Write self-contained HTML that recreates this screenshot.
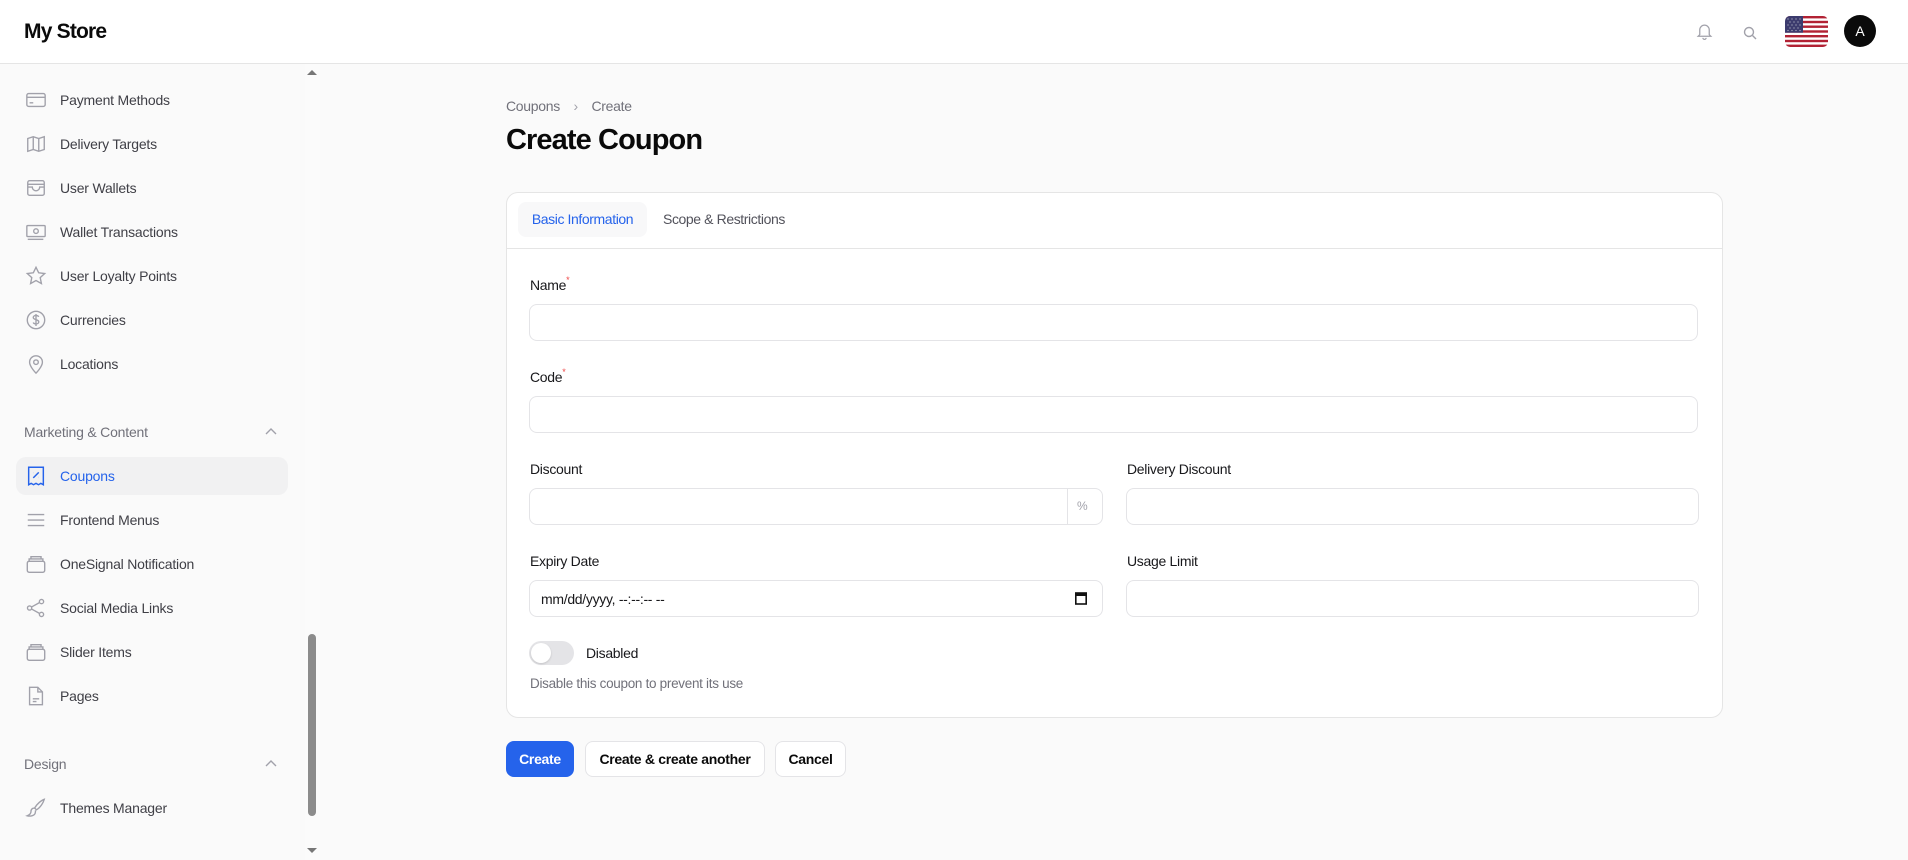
<!DOCTYPE html>
<html><head><meta charset="utf-8"><style>
*{box-sizing:border-box;margin:0;padding:0}
body{width:1908px;height:860px;overflow:hidden;background:#fafafa;font-family:"Liberation Sans",sans-serif;color:#0a0a0a;position:relative}
.abs{position:absolute}
#hdr{left:0;top:0;width:1908px;height:64px;background:#fff;border-bottom:1px solid #e5e5e5}
.logo{left:24px;top:20px;font-size:21px;font-weight:700;letter-spacing:-0.8px}
#side{left:0;top:64px;width:305px;height:796px;background:#fafafa}
#track{left:305px;top:64px;width:15px;height:796px;background:#fbfbfb}
.thumb{left:308px;top:634px;width:8px;height:182px;background:#8c8c8c;border-radius:4px}
.item{left:0;width:300px;height:38px;display:flex;align-items:center;font-size:14px;color:#3f3f46;letter-spacing:-0.2px}
.item svg{position:absolute;left:25px;width:22px;height:22px}
.item span{position:absolute;left:60px}
.sec{left:24px;font-size:14px;color:#71717a;letter-spacing:-0.2px}
.chev{left:265px;width:12px;height:8px}
.active{left:16px;top:457px;width:272px;height:38px;background:#f1f1f2;border-radius:10px}
.bc{left:506px;top:98px;font-size:14px;color:#71717a;letter-spacing:-0.3px}
.title{left:506px;top:124px;font-size:29px;font-weight:700;letter-spacing:-0.9px}
.card{left:506px;top:192px;width:1217px;height:526px;background:#fff;border:1px solid #e5e5e5;border-radius:12px}
.tabline{left:507px;top:248px;width:1215px;height:1px;background:#e5e5e5}
.tab1{left:518px;top:202px;width:129px;height:35px;background:#f8f8f9;border-radius:8px;font-size:14px;color:#2563eb;text-align:center;line-height:35px;letter-spacing:-0.4px}
.tab2{left:663px;top:202px;font-size:14px;color:#52525b;line-height:35px;letter-spacing:-0.4px}
.lbl{font-size:14px;color:#18181b;letter-spacing:-0.3px}
.lbl i{color:#ef4444;font-style:normal;font-size:9px;vertical-align:top;position:relative;top:-2px}
.inp{background:#fff;border:1px solid #e4e4e7;border-radius:8px;height:37px}
.btn{top:741px;height:36px;border-radius:8px;font-size:14px;font-weight:700;line-height:34px;text-align:center;letter-spacing:-0.3px;border:1px solid #e4e4e7;background:#fff}
</style></head><body>
<div id="hdr" class="abs"></div>
<div class="abs logo">My Store</div>
<svg class="abs" style="left:1695px;top:21px" width="19" height="21" viewBox="0 0 24 24" fill="none" stroke="#a1a1aa" stroke-width="1.6"><path d="M6 16V10a6 6 0 0 1 12 0v6l2 2H4l2-2z"/><path d="M10 20a2 2 0 0 0 4 0"/></svg>
<svg class="abs" style="left:1743px;top:26px" width="14" height="14" viewBox="0 0 14 14" fill="none" stroke="#a1a1aa" stroke-width="1.4"><circle cx="6" cy="6" r="4.5"/><path d="M9.5 9.5L13 13"/></svg>
<div class="abs" style="left:1785px;top:16px;width:43px;height:31px;border-radius:5px;overflow:hidden">
<svg width="43" height="31" viewBox="0 0 43 31" style="display:block">
<rect width="43" height="31" fill="#fff"/>
<g fill="#b22234"><rect y="0" width="43" height="2.4"/><rect y="4.8" width="43" height="2.4"/><rect y="9.5" width="43" height="2.4"/><rect y="14.3" width="43" height="2.4"/><rect y="19" width="43" height="2.4"/><rect y="23.8" width="43" height="2.4"/><rect y="28.6" width="43" height="2.4"/></g>
<rect width="18" height="16.7" fill="#3c3b6e"/>
<g fill="#fff" opacity=".7"><circle cx="3" cy="3" r=".6"/><circle cx="7" cy="3" r=".6"/><circle cx="11" cy="3" r=".6"/><circle cx="15" cy="3" r=".6"/><circle cx="5" cy="6" r=".6"/><circle cx="9" cy="6" r=".6"/><circle cx="13" cy="6" r=".6"/><circle cx="3" cy="9" r=".6"/><circle cx="7" cy="9" r=".6"/><circle cx="11" cy="9" r=".6"/><circle cx="15" cy="9" r=".6"/><circle cx="5" cy="12" r=".6"/><circle cx="9" cy="12" r=".6"/><circle cx="13" cy="12" r=".6"/><circle cx="3" cy="14.5" r=".6"/><circle cx="7" cy="14.5" r=".6"/><circle cx="11" cy="14.5" r=".6"/><circle cx="15" cy="14.5" r=".6"/></g>
</svg></div>
<div class="abs" style="left:1844px;top:15px;width:32px;height:32px;border-radius:50%;background:#0a0a0a;color:#fff;font-size:14px;text-align:center;line-height:32px">A</div>

<div id="side" class="abs"></div>
<div id="track" class="abs"></div>
<div class="abs" style="left:307px;top:70px;width:0;height:0;border-left:5px solid transparent;border-right:5px solid transparent;border-bottom:5px solid #777"></div>
<div class="abs" style="left:307px;top:848px;width:0;height:0;border-left:5px solid transparent;border-right:5px solid transparent;border-top:5px solid #777"></div>
<div class="abs thumb"></div>
<div class="abs active"></div>

<div class="abs item" style="top:81px"><svg viewBox="0 0 24 24" fill="none" stroke="#a1a1aa" stroke-width="1.5"><rect x="2" y="5" width="20" height="14" rx="2"/><path d="M2 9h20M5 15h4"/></svg><span>Payment Methods</span></div>
<div class="abs item" style="top:125px"><svg viewBox="0 0 24 24" fill="none" stroke="#a1a1aa" stroke-width="1.5"><path d="M3 6l6-2 6 2 6-2v14l-6 2-6-2-6 2z"/><path d="M9 4v14M15 6v14"/></svg><span>Delivery Targets</span></div>
<div class="abs item" style="top:169px"><svg viewBox="0 0 24 24" fill="none" stroke="#a1a1aa" stroke-width="1.5"><rect x="3" y="4" width="18" height="16" rx="2"/><path d="M3 8h18M3 11h5a4 4 0 0 0 8 0h5"/></svg><span>User Wallets</span></div>
<div class="abs item" style="top:213px"><svg viewBox="0 0 24 24" fill="none" stroke="#a1a1aa" stroke-width="1.5"><rect x="2" y="5" width="20" height="12" rx="1"/><circle cx="12" cy="11" r="2.5"/><path d="M3 20h17"/></svg><span>Wallet Transactions</span></div>
<div class="abs item" style="top:257px"><svg viewBox="0 0 24 24" fill="none" stroke="#a1a1aa" stroke-width="1.5"><path d="M12 2.5l2.9 6 6.6.8-4.9 4.5 1.3 6.5L12 17l-5.9 3.3 1.3-6.5-4.9-4.5 6.6-.8z"/></svg><span>User Loyalty Points</span></div>
<div class="abs item" style="top:301px"><svg viewBox="0 0 24 24" fill="none" stroke="#a1a1aa" stroke-width="1.5"><circle cx="12" cy="12" r="9.5"/><path d="M15 8.5c-.5-1-1.7-1.5-3-1.5-1.7 0-3 .9-3 2.3 0 3 6 1.7 6 4.7 0 1.4-1.3 2.3-3 2.3-1.4 0-2.6-.6-3-1.6M12 5.5v13"/></svg><span>Currencies</span></div>
<div class="abs item" style="top:345px"><svg viewBox="0 0 24 24" fill="none" stroke="#a1a1aa" stroke-width="1.5"><path d="M12 22s-7-7-7-12a7 7 0 0 1 14 0c0 5-7 12-7 12z"/><circle cx="12" cy="10" r="2.5"/></svg><span>Locations</span></div>

<div class="abs sec" style="top:424px">Marketing &amp; Content</div>
<svg class="abs chev" style="top:427px" viewBox="0 0 12 8" fill="none" stroke="#a1a1aa" stroke-width="1.4"><path d="M1 7l5-5 5 5"/></svg>

<div class="abs item" style="top:457px;color:#2563eb"><svg viewBox="0 0 24 24" fill="none" stroke="#2563eb" stroke-width="1.6"><path d="M4 2.5h16v19l-2.7-1.5-2.6 1.5-2.7-1.5-2.7 1.5-2.6-1.5L4 21.5z"/><path d="M9 14l6-6M9.5 8.5h.1M14.5 13.5h.1"/></svg><span>Coupons</span></div>
<div class="abs item" style="top:501px"><svg viewBox="0 0 24 24" fill="none" stroke="#a1a1aa" stroke-width="1.5"><path d="M3 6h18M3 12h18M3 18h18"/></svg><span>Frontend Menus</span></div>
<div class="abs item" style="top:545px"><svg viewBox="0 0 24 24" fill="none" stroke="#a1a1aa" stroke-width="1.5"><rect x="2.5" y="9" width="19" height="12" rx="2"/><path d="M4.5 9V6.5h15V9M6.5 6.5V4h11v2.5"/></svg><span>OneSignal Notification</span></div>
<div class="abs item" style="top:589px"><svg viewBox="0 0 24 24" fill="none" stroke="#a1a1aa" stroke-width="1.5"><circle cx="18" cy="5" r="2.3"/><circle cx="5" cy="12" r="2.3"/><circle cx="18" cy="19" r="2.3"/><path d="M7 11l9-5M7 13l9 5"/></svg><span>Social Media Links</span></div>
<div class="abs item" style="top:633px"><svg viewBox="0 0 24 24" fill="none" stroke="#a1a1aa" stroke-width="1.5"><rect x="2.5" y="9" width="19" height="12" rx="2"/><path d="M4.5 9V6.5h15V9M6.5 6.5V4h11v2.5"/></svg><span>Slider Items</span></div>
<div class="abs item" style="top:677px"><svg viewBox="0 0 24 24" fill="none" stroke="#a1a1aa" stroke-width="1.5"><path d="M5 2.5h9l5 5v14H5z"/><path d="M14 2.5v5h5M8.5 15h7M8.5 18h4"/></svg><span>Pages</span></div>

<div class="abs sec" style="top:756px">Design</div>
<svg class="abs chev" style="top:759px" viewBox="0 0 12 8" fill="none" stroke="#a1a1aa" stroke-width="1.4"><path d="M1 7l5-5 5 5"/></svg>
<div class="abs item" style="top:789px"><svg viewBox="0 0 24 24" fill="none" stroke="#a1a1aa" stroke-width="1.5"><path d="M21 2.5c-3 1-8 5-10.5 9.5l2 2C17 11.5 20 6 21 2.5z"/><path d="M10.5 12c-3 0-4 2-4 4s-1.5 3.5-4 4.5c3 .8 7.5 0 8.5-2.5.5-1.3.5-2.5.5-3.5"/></svg><span>Themes Manager</span></div>

<div class="abs bc">Coupons <span style="display:inline-block;margin:0 10px;color:#a1a1aa">&#x203A;</span> Create</div>
<div class="abs title">Create Coupon</div>

<div class="abs card"></div>
<div class="abs tabline"></div>
<div class="abs tab1">Basic Information</div>
<div class="abs tab2">Scope &amp; Restrictions</div>

<div class="abs lbl" style="left:530px;top:277px">Name<i>*</i></div>
<div class="abs inp" style="left:529px;top:304px;width:1169px"></div>
<div class="abs lbl" style="left:530px;top:369px">Code<i>*</i></div>
<div class="abs inp" style="left:529px;top:396px;width:1169px"></div>

<div class="abs lbl" style="left:530px;top:461px">Discount</div>
<div class="abs inp" style="left:529px;top:488px;width:574px"></div>
<div class="abs" style="left:1067px;top:489px;width:1px;height:35px;background:#e4e4e7"></div>
<div class="abs" style="left:1077px;top:499px;font-size:12px;color:#a1a1aa">%</div>
<div class="abs lbl" style="left:1127px;top:461px">Delivery Discount</div>
<div class="abs inp" style="left:1126px;top:488px;width:573px"></div>

<div class="abs lbl" style="left:530px;top:553px">Expiry Date</div>
<div class="abs inp" style="left:529px;top:580px;width:574px"></div>
<div class="abs" style="left:541px;top:591px;font-size:14px;color:#18181b;letter-spacing:-0.3px">mm/dd/yyyy, --:--:-- --</div>
<svg class="abs" style="left:1075px;top:591px" width="12" height="14" viewBox="0 0 12 14"><rect x="0.8" y="2" width="10.4" height="11" fill="none" stroke="#111" stroke-width="1.6"/><rect x="0" y="2" width="12" height="3" fill="#111"/></svg>
<div class="abs lbl" style="left:1127px;top:553px">Usage Limit</div>
<div class="abs inp" style="left:1126px;top:580px;width:573px"></div>

<div class="abs" style="left:529px;top:641px;width:45px;height:24px;border-radius:12px;background:#e4e4e7"></div>
<div class="abs" style="left:531px;top:643px;width:20px;height:20px;border-radius:50%;background:#fff;box-shadow:0 1px 2px rgba(0,0,0,.15)"></div>
<div class="abs lbl" style="left:586px;top:645px">Disabled</div>
<div class="abs" style="left:530px;top:676px;font-size:13.5px;color:#71717a;letter-spacing:-0.3px">Disable this coupon to prevent its use</div>

<div class="abs btn" style="left:506px;width:68px;background:#2563eb;border-color:#2563eb;color:#fff">Create</div>
<div class="abs btn" style="left:585px;width:180px">Create &amp; create another</div>
<div class="abs btn" style="left:775px;width:71px">Cancel</div>
</body></html>
